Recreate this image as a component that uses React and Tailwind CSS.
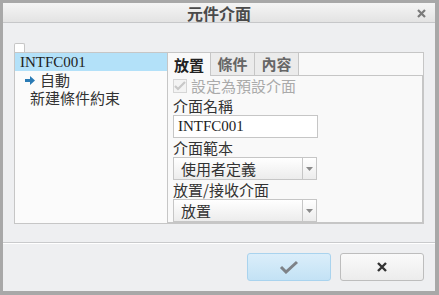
import { useState } from "react";

const cjk = { fontFamily: '"Noto Sans CJK TC", "Noto Sans CJK SC", sans-serif' };
const latin = { fontFamily: '"Liberation Serif", "Noto Sans CJK TC", serif' };

function Select({ value }) {
  return (
    <div className="flex h-[23px] w-[144px] border border-[#c6c6c6] bg-gradient-to-b from-[#ffffff] to-[#ececec]">
      <div className="flex-1 pl-[7px] text-[15px] leading-[21px] text-[#333]" style={cjk}>
        {value}
      </div>
      <div className="flex w-[14px] items-center justify-center border-l border-[#c6c6c6]">
        <svg width="7" height="4" viewBox="0 0 7 4">
          <path d="M0 0h7L3.5 4z" fill="#8a8a8a" />
        </svg>
      </div>
    </div>
  );
}

export default function App() {
  const [tab, setTab] = useState(0);
  const tabs = ["放置", "條件", "內容"];

  return (
    <div className="h-[295px] w-[439px] bg-[#a8a8a8] pb-[4px] pl-[3px] pr-[4px] pt-[3px]">
      <div className="flex h-full flex-col bg-[#eeeff1]">
        {/* title bar */}
        <div className="relative flex h-[20px] items-center justify-center border-b border-[#c6c7c9] bg-gradient-to-b from-[#f5f5f5] to-[#e3e3e3]">
          <span className="text-[16px] font-bold leading-none text-[#4a4a4a]" style={cjk}>
            元件介面
          </span>
          <svg width="9" height="9" viewBox="0 0 9 9" className="absolute right-[9px] top-[6px]">
            <path d="M1 1l7 7M8 1L1 8" stroke="#7a7a7a" strokeWidth="2.2" />
          </svg>
        </div>

        {/* body */}
        <div className="h-[219px] px-[11px] pt-[20px]">
          <div className="h-[9px] w-[11px] rounded-t-[2px] border border-b-0 border-[#c6c6c6] bg-white" />
          <div className="flex h-[172px]">
            {/* tree */}
            <div className="w-[154px] border border-[#c6c6c6] bg-[#fbfbfb] text-[15px] leading-[18px]">
              <div className="h-[18px] bg-[#b3e1f9] pl-[5px] text-[#222]" style={latin}>
                INTFC001
              </div>
              <div className="flex h-[18px] items-center pl-[10px] text-[#333]" style={cjk}>
                <svg width="10" height="9" viewBox="0 0 10 9" className="mr-[5px]">
                  <path d="M0 3h5V0l5 4.5L5 9V6H0z" fill="#2a7bb5" />
                </svg>
                自動
              </div>
              <div className="h-[18px] pl-[15px] text-[#333]" style={cjk}>
                新建條件約束
              </div>
            </div>

            {/* properties */}
            <div className="flex flex-1 flex-col border-t border-[#c6c6c6]">
              <div className="flex h-[23px]">
                {tabs.map((t, i) => (
                  <button
                    key={t}
                    onClick={() => setTab(i)}
                    className={
                      tab === i
                        ? "h-[23px] w-[43px] border-r border-[#c6c6c6] bg-[#f9f9f9] text-[15px] font-bold leading-[22px] text-[#222]"
                        : "h-[23px] w-[44px] border-b border-r border-[#c6c6c6] bg-[#ebebeb] text-[15px] font-bold leading-[22px] text-[#666]"
                    }
                    style={cjk}
                  >
                    {t}
                  </button>
                ))}
                <div className="flex-1 border-b border-r border-[#c6c6c6] bg-[#f9f9f9]" />
              </div>
              <div className="flex-1 border-b-2 border-r-2 border-[#c6c6c6] bg-[#f9f9f9] pl-[5px] text-[15px] text-[#333]" style={cjk}>
                <div className="flex h-[20px] items-center text-[#aaa]">
                  <div className="mr-[4px] flex h-[14px] w-[14px] items-center justify-center border border-[#d6d6d6] bg-[#f3f3f3]">
                    <svg width="12" height="10" viewBox="0 0 12 10">
                      <path d="M1 5l3 3 7-7" stroke="#c8c8c8" strokeWidth="2.2" fill="none" />
                    </svg>
                  </div>
                  設定為預設介面
                </div>
                <div className="h-[19px] leading-[19px]">介面名稱</div>
                <div className="h-[23px] w-[145px] border border-[#c6c6c6] bg-white pl-[4px] leading-[21px] text-[#222]" style={latin}>
                  INTFC001
                </div>
                <div className="h-[19px] leading-[19px]">介面範本</div>
                <Select value="使用者定義" />
                <div className="h-[19px] leading-[19px]">放置/接收介面</div>
                <Select value="放置" />
              </div>
            </div>
          </div>
        </div>

        {/* footer */}
        <div className="flex flex-1 items-start justify-end gap-[9px] border-t border-[#c9cacc] pr-[11px] pt-[10px] shadow-[inset_0_1px_0_#ffffff]">
          <button className="flex h-[28px] w-[84px] items-center justify-center rounded-[3px] border border-[#a9d3ee] bg-gradient-to-b from-[#dbeefa] to-[#c3e2f5]">
            <svg width="20" height="14" viewBox="0 0 20 14">
              <path d="M2 7l5 5L18 2" stroke="#7e8287" strokeWidth="3" fill="none" />
            </svg>
          </button>
          <button className="flex h-[28px] w-[84px] items-center justify-center rounded-[3px] border border-[#bdbdbd] bg-gradient-to-b from-[#fafafa] to-[#ececec]">
            <svg width="10" height="10" viewBox="0 0 10 10">
              <path d="M1 1l8 8M9 1L1 9" stroke="#333" strokeWidth="2.4" />
            </svg>
          </button>
        </div>
      </div>
    </div>
  );
}
